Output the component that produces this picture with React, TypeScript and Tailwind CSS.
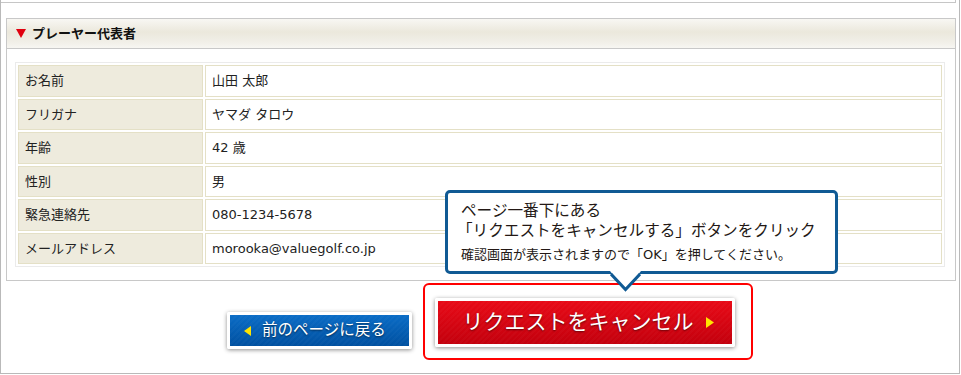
import React from "react";

const rows = [
  { label: "お名前", value: "山田 太郎" },
  { label: "フリガナ", value: "ヤマダ タロウ" },
  { label: "年齢", value: "42 歳" },
  { label: "性別", value: "男" },
  { label: "緊急連絡先", value: "080-1234-5678" },
  { label: "メールアドレス", value: "morooka@valuegolf.co.jp" },
];

const App = () => {
  return (
    <div
      className="relative w-[961px] h-[375px] bg-white text-[#222]"
      style={{ fontFamily: '"DejaVu Sans", "Noto Sans CJK JP", sans-serif' }}
    >
      {/* outer frame */}
      <div className="w-[960px] h-[374px] border-x border-b border-[#b9b9b9]">
        <div className="h-[3px] mr-[3px] border-b border-r border-[#c6c6c6]" />

        {/* player panel */}
        <div className="ml-[5px] mr-[3px] mt-[15px] border border-[#c8c8c8]">
          <div className="h-[30px] flex items-center pl-[9px] border-b border-[#c8c8c8] bg-[linear-gradient(to_bottom,#f8f7f3,#ebe8dc_45%,#f1efe8_80%,#f7f6f2)]">
            <svg width="10" height="9" viewBox="0 0 10 9" className="mr-[6px]">
              <polygon points="0,0 10,0 5,9" fill="#e0000f" />
            </svg>
            <span className="text-[13px] font-bold text-[#111]">プレーヤー代表者</span>
          </div>
          <div className="pl-[8px] pr-[10px] py-[13px]">
            <table className="w-[930px] border border-[#ebebeb] border-separate border-spacing-[2px] text-[13px]">
              <tbody>
                {rows.map((r) => (
                  <tr key={r.label}>
                    <td className="w-[185px] h-[31.5px] px-[6px] border border-[#e4e0c6] bg-[#eeebdd] align-middle">
                      {r.label}
                    </td>
                    <td className="h-[31.5px] px-[6px] border border-[#e4e0c6] bg-white align-middle">
                      {r.value}
                    </td>
                  </tr>
                ))}
              </tbody>
            </table>
          </div>
        </div>

        {/* buttons */}
        <div className="flex items-start pl-[226px] mt-[2px]">
          <button className="mt-[29px] h-[37px] w-[185px] flex items-center pl-[14px] gap-[11px] border-[3px] border-white rounded-[2px] shadow-[0_1px_4px_rgba(0,0,0,0.45)] bg-[repeating-linear-gradient(135deg,rgba(255,255,255,0.025)_0_2px,transparent_2px_4px),linear-gradient(to_bottom,#0a6cc6,#0050a0)] text-white text-[15.5px] [text-shadow:0_1px_2px_rgba(0,0,0,0.55)]">
            <svg width="7" height="10" viewBox="0 0 7 10">
              <polygon points="7,0 7,10 0,5" fill="#ffe400" />
            </svg>
            <span>前のページに戻る</span>
          </button>

          <div className="ml-[11px] w-[330px] h-[77px] border-2 border-[#ff0000] rounded-[6px] pl-[10px] pt-[13px]">
            <button className="h-[49px] w-[300px] flex items-center justify-center gap-[12px] pl-[6px] border-[3px] border-white rounded-[2px] shadow-[0_1px_4px_rgba(0,0,0,0.45)] bg-[repeating-linear-gradient(135deg,rgba(255,255,255,0.025)_0_2px,transparent_2px_4px),linear-gradient(to_bottom,#e80a17,#c3000d)] text-white text-[21px] [text-shadow:0_1px_2px_rgba(0,0,0,0.55)]">
              <span>リクエストをキャンセル</span>
              <svg width="8" height="11" viewBox="0 0 8 11">
                <polygon points="0,0 8,5.5 0,11" fill="#ffe400" />
              </svg>
            </button>
          </div>
        </div>
      </div>

      {/* callout */}
      <div className="absolute left-[445px] top-[190px] w-[393px] h-[84px] border-[3px] border-[#105a94] rounded-[5px] bg-white pl-[13px] pt-[8px] text-[#231815]">
        <p className="text-[15.6px] leading-[20px]">ページ一番下にある</p>
        <p className="text-[15.6px] leading-[20px] -ml-[4px]">「リクエストをキャンセルする」ボタンをクリック</p>
        <p className="text-[13px] leading-[22px] mt-[3px]">確認画面が表示されますので「OK」を押してください。</p>
      </div>
      <svg
        className="absolute left-[610px] top-[271px]"
        width="31"
        height="21"
        viewBox="0 0 31 21"
      >
        <polygon points="0,0 31,0 15.5,19" fill="#fff" />
        <polyline points="1,3 15.5,18.5 30,3" fill="none" stroke="#105a94" strokeWidth="3" />
      </svg>
    </div>
  );
};

export default App;
